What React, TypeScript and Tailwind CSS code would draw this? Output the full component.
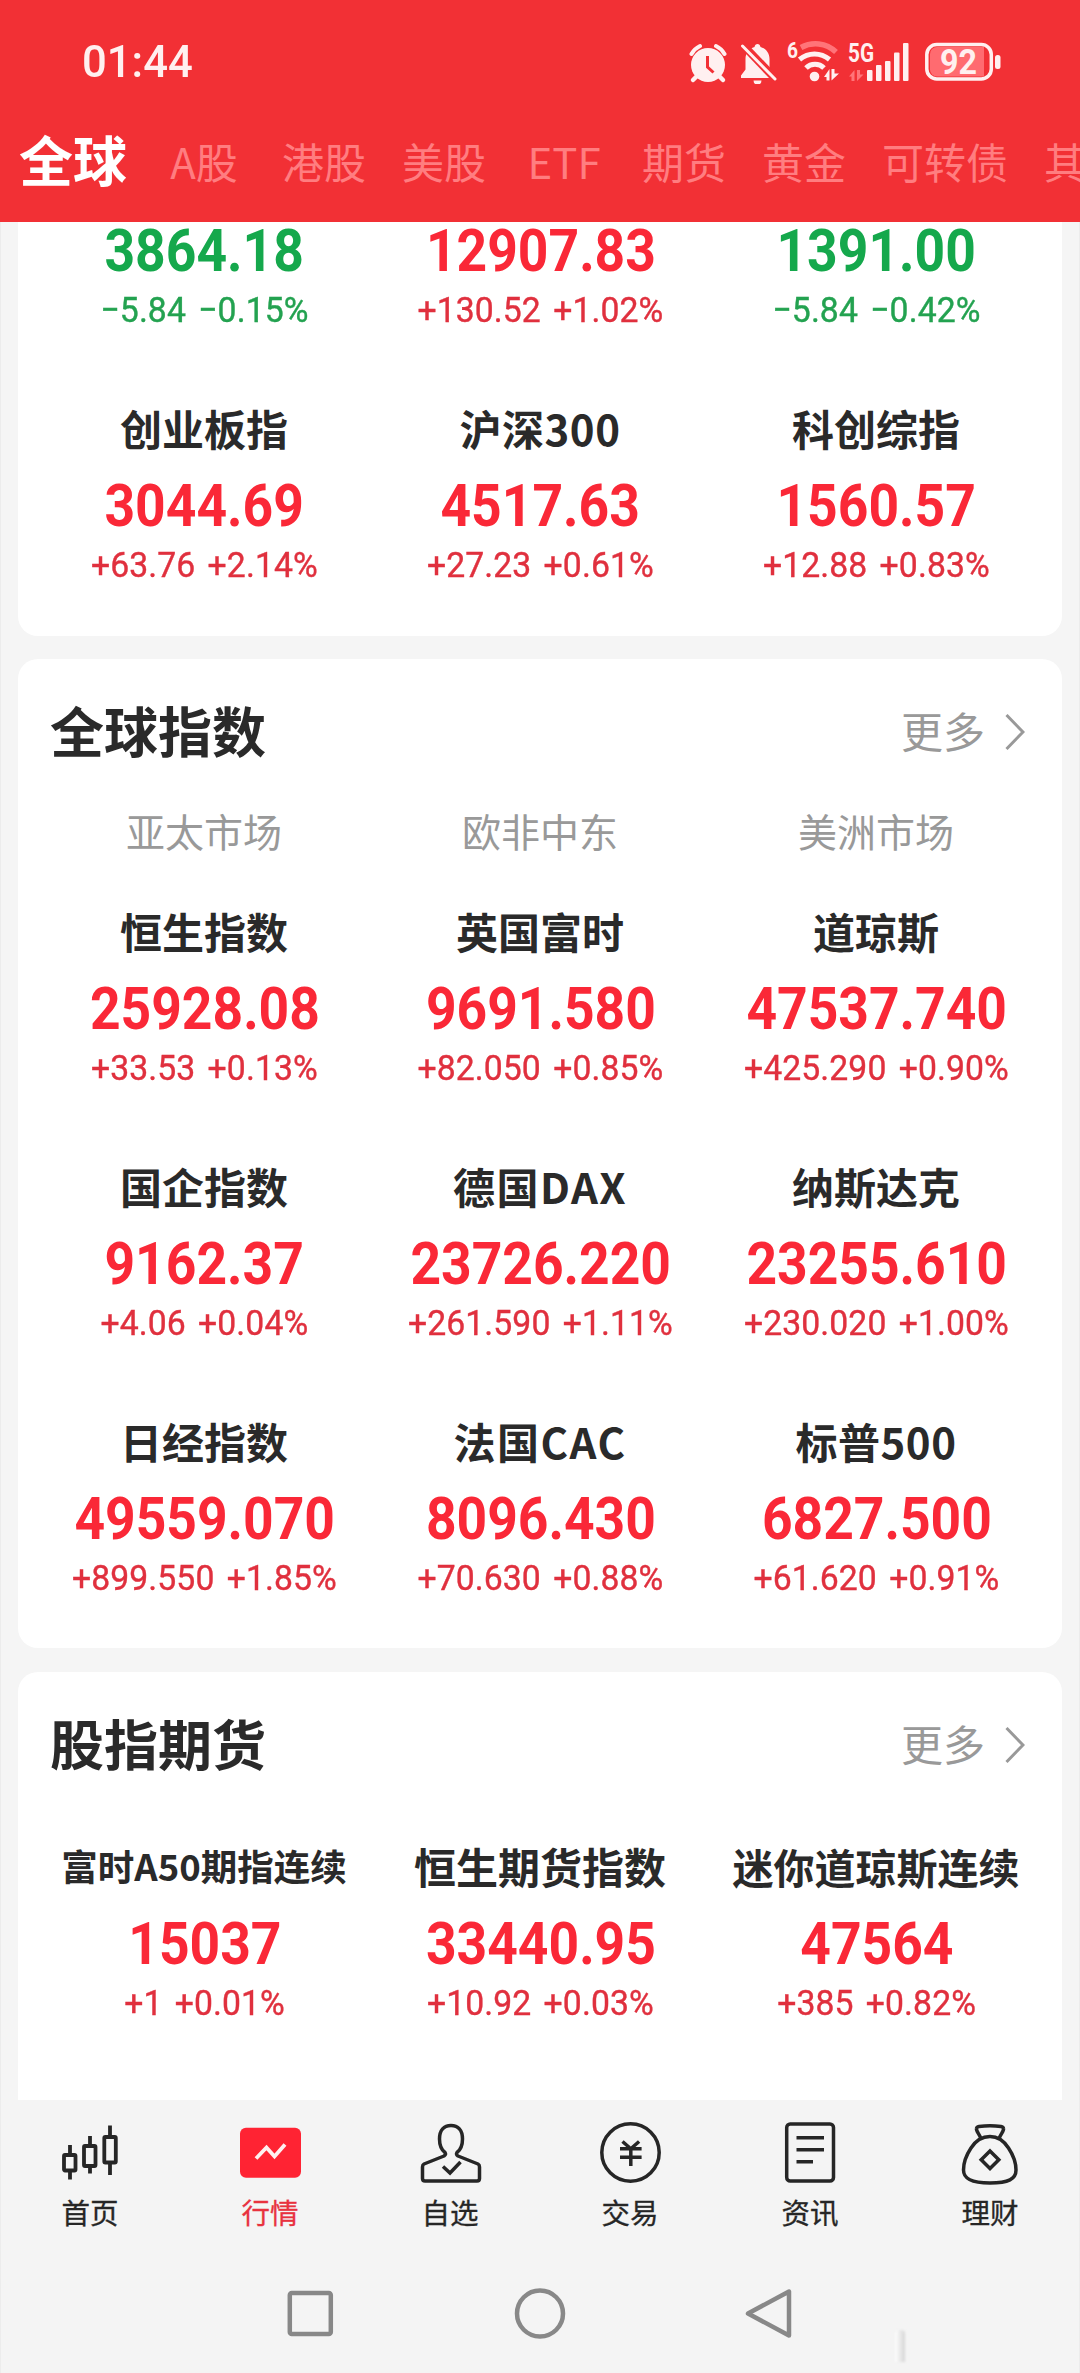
import React from "react";

type Quote = { name?: string; value: string; change: string; down?: boolean; size?: string };

// The first row is scrolled up under the header, so only its figures remain in view.
const mainland: Quote[] = [
  { value: "3864.18", change: "−5.84 −0.15%", down: true },
  { value: "12907.83", change: "+130.52 +1.02%" },
  { value: "1391.00", change: "−5.84 −0.42%", down: true },
  { name: "创业板指", value: "3044.69", change: "+63.76 +2.14%" },
  { name: "沪深300", value: "4517.63", change: "+27.23 +0.61%", size: "text-[42px] tracking-[0.5px]" },
  { name: "科创综指", value: "1560.57", change: "+12.88 +0.83%" },
];

const world: Quote[] = [
  { name: "恒生指数", value: "25928.08", change: "+33.53 +0.13%" },
  { name: "英国富时", value: "9691.580", change: "+82.050 +0.85%" },
  { name: "道琼斯", value: "47537.740", change: "+425.290 +0.90%" },
  { name: "国企指数", value: "9162.37", change: "+4.06 +0.04%" },
  { name: "德国DAX", value: "23726.220", change: "+261.590 +1.11%", size: "text-[42px] tracking-[1.5px]" },
  { name: "纳斯达克", value: "23255.610", change: "+230.020 +1.00%" },
  { name: "日经指数", value: "49559.070", change: "+899.550 +1.85%" },
  { name: "法国CAC", value: "8096.430", change: "+70.630 +0.88%", size: "text-[42px] tracking-[1.5px]" },
  { name: "标普500", value: "6827.500", change: "+61.620 +0.91%", size: "text-[42px] tracking-[0.5px]" },
];

const futures: Quote[] = [
  { name: "富时A50期指连续", value: "15037", change: "+1 +0.01%", size: "text-[36.5px]" },
  { name: "恒生期货指数", value: "33440.95", change: "+10.92 +0.03%" },
  { name: "迷你道琼斯连续", value: "47564", change: "+385 +0.82%", size: "text-[41px]" },
];

const tabs = ["A股", "港股", "美股", "ETF", "期货", "黄金", "可转债", "其他"];

function QuoteCell({ q }: { q: Quote }) {
  return (
    <div className="flex flex-col items-center whitespace-nowrap">
      <div className={`h-14 leading-[52px] font-bold text-[#2a2a2a] ${q.size ?? "text-[42px]"}`}>{q.name}</div>
      <div
        className={`mt-4 h-16 origin-center scale-x-[0.913] pl-px font-[Roboto] text-[58.5px] leading-[64px] font-bold ${
          q.down ? "text-[#15a84c]" : "text-[#fa2837]"
        }`}
      >
        {q.value}
      </div>
      <div
        className={`mt-[5px] h-11 origin-center scale-x-[0.95] pl-px font-[Roboto] text-[35.5px] leading-[44px] tracking-[0.1px] [word-spacing:4px] [-webkit-text-stroke:0.4px_currentColor] ${
          q.down ? "text-[#23a250]" : "text-[#e0303e]"
        }`}
      >
        {q.change}
      </div>
    </div>
  );
}

function QuoteGrid({ items }: { items: Quote[] }) {
  return (
    <div className="grid grid-cols-3 gap-y-[70px]">
      {items.map((q) => (
        <QuoteCell key={q.value} q={q} />
      ))}
    </div>
  );
}

function SectionHeader({ title }: { title: string }) {
  return (
    <div className="-mx-[18px] flex h-[145px] items-center pr-[37px] pl-[32px]">
      <h2 className="flex-1 pb-1 text-[54px] leading-[60px] font-bold text-[#2a2a2a]">{title}</h2>
      <span className="pb-1 text-[42px] leading-[60px] text-[#999]">更多</span>
      <svg className="ml-5 h-[38px] w-5" viewBox="0 0 20 38" fill="none" stroke="#999" strokeWidth="3">
        <path d="M1.500 2 18 19 1.500 36" />
      </svg>
    </div>
  );
}

function StatusIcons() {
  return (
    <div className="flex h-[44px] items-center text-[#fff0f0]">
      {/* alarm */}
      <svg className="h-11 w-[38px]" viewBox="0 0 38 44" fill="none">
        <circle cx="19" cy="25" r="17" fill="currentColor" />
        <path d="M2.500 14A19 19 0 0 1 11 6" stroke="currentColor" strokeWidth="4" strokeLinecap="round" />
        <path d="M27 6a19 19 0 0 1 8.500 8" stroke="currentColor" strokeWidth="4" strokeLinecap="round" />
        <path d="m8 36-4 4M30 36l4 4" stroke="currentColor" strokeWidth="4.500" strokeLinecap="round" />
        <path d="M18.500 16v11l6 5.500" stroke="#f23035" strokeWidth="3" />
      </svg>
      {/* muted bell */}
      <svg className="ml-[13px] h-11 w-[38px]" viewBox="0 0 38 44" fill="currentColor">
        <path d="M1 38v-2.500l4.500-6V19c0-6 3.500-10.500 9-12 .3-2 1.500-3 3-3s2.700 1 3 3c5.500 1.500 9 6 9 12v10.500L35 38z" />
        <path d="M13.500 40.500h8a4 4 0 0 1-8 0z" />
        <path d="M3 5 36 39.500" stroke="#f23035" strokeWidth="8" />
        <path d="M2.500 6 35 39" stroke="currentColor" strokeWidth="3" strokeLinecap="round" />
      </svg>
      {/* wifi */}
      <svg className="ml-[9px] h-11 w-[54px]" viewBox="0 0 54 44" fill="none">
        <text x="0" y="17.500" fontSize="22.500" fontWeight="700" fontFamily="Roboto, sans-serif" fill="currentColor" textLength="11" lengthAdjust="spacingAndGlyphs">6</text>
        <path d="M14 7.500C25 1.500 39 2.500 49 12" stroke="#ff7479" strokeWidth="5.500" />
        <path d="M12.500 19.500c9-7.500 21-7.500 30 0" stroke="currentColor" strokeWidth="5" />
        <path d="M19 28c5-5 13-5 18 0" stroke="currentColor" strokeWidth="5" />
        <circle cx="27.500" cy="36.500" r="4.800" fill="currentColor" />
        <path d="M37 37h2.500v3.500h3V29zM44.500 29v11.500l7.500-7h-4.500V29z" fill="currentColor" />
      </svg>
      {/* cellular signal */}
      <svg className="ml-[7px] h-11 w-[62px]" viewBox="0 0 62 44" fill="currentColor">
        <text x="0" y="21.500" fontSize="26" fontWeight="700" fontFamily="Roboto, sans-serif" textLength="26" lengthAdjust="spacingAndGlyphs">5G</text>
        <path d="M1 36.500h2.500V41h3V30zM9 30v11l6.500-6.500H12V30z" fill="#ff7479" />
        <rect x="19" y="30" width="5.500" height="11" rx="1" />
        <rect x="28" y="25" width="5.500" height="16" rx="1" />
        <rect x="37" y="21" width="5.500" height="20" rx="1" />
        <rect x="46" y="12.500" width="5.500" height="28.500" rx="1" />
        <rect x="55" y="3" width="5.500" height="38" rx="1" />
      </svg>
      {/* battery */}
      <svg className="ml-[15px] h-11 w-[78px]" viewBox="0 0 78 44" fill="none">
        <rect x="1.800" y="4.500" width="64.500" height="34.500" rx="10" stroke="currentColor" strokeWidth="3.500" />
        <path d="M12 7h47v29.500H12a7 7 0 0 1-7-7V14a7 7 0 0 1 7-7z" fill="#ff6b70" />
        <rect x="70" y="15" width="5.500" height="14" rx="2.500" fill="currentColor" />
        <text x="15" y="34" fontSize="35" fontWeight="700" fontFamily="Roboto, sans-serif" fill="currentColor" textLength="37" lengthAdjust="spacingAndGlyphs">92</text>
      </svg>
    </div>
  );
}

const navItems: { label: string; active?: boolean; icon: React.ReactNode }[] = [
  {
    label: "首页",
    icon: (
      <g strokeWidth="3.800">
        <rect x="7" y="35" width="11.500" height="15.500" rx="1" />
        <path d="M13 25v9M13 51v8.500" />
        <rect x="27" y="26" width="11.500" height="20" rx="1" />
        <path d="M33 16v9M33 47v6.500" />
        <rect x="47.300" y="17" width="11.500" height="25.500" rx="1" />
        <path d="M53 5.500v11M53 43v12" />
      </g>
    ),
  },
  {
    label: "行情",
    active: true,
    icon: (
      <g stroke="none">
        <rect x="3" y="7.700" width="61" height="50" rx="6" fill="#ff2333" />
        <path d="M19 38.500 29.500 27.500l8 9L48 24.500" stroke="#fff0f0" strokeWidth="3.800" />
      </g>
    ),
  },
  {
    label: "自选",
    icon: (
      <g strokeWidth="3.500" strokeLinejoin="round">
        <path d="M28 32.500C24 29.500 22.500 25 22.500 19 22.500 10 27 5.500 34 5.500S45.500 10 45.500 19c0 6-1.500 10.500-5.500 13.500-1 1.500-.5 2.500 1 3.500l20 8c1 .5 1.500 1.500 1.500 3v11.500c0 1.500-1 2.500-2.500 2.500H8c-1.500 0-2.500-1-2.500-2.500V47c0-1.500.5-2.500 1.500-3l20-8c1.500-1 2-2 1-3.500z" />
        <path d="m26 46.500 7 6.500 10.500-11" strokeLinejoin="miter" />
      </g>
    ),
  },
  {
    label: "交易",
    icon: (
      <g strokeWidth="3.500">
        <circle cx="33.500" cy="32.500" r="28.700" />
        <path d="M23 28.700h21.600M23 37.300h21.600M33.800 28v18M25.500 21.500l8.300 7.200 8.300-7.200" />
      </g>
    ),
  },
  {
    label: "资讯",
    icon: (
      <g strokeWidth="3.500">
        <rect x="9.700" y="4" width="46.800" height="57" rx="3.500" />
        <path d="M19.500 17.800H47M19.500 29.800H47M19.500 41.700H36" />
      </g>
    ),
  },
  {
    label: "理财",
    icon: (
      <g strokeWidth="3.500" strokeLinejoin="round">
        <path d="M24 18.500c-2-5-5-7.500-4.500-10 .2-1.300 1-1.700 2.500-2 7-1 15-1 22 0 1.500.3 2.300.7 2.500 2 .5 2.500-2.500 5-4.500 10" />
        <path d="M33 16.500c8 0 14 4.500 18.500 11.500 4 6 7.500 15 7.500 22 0 9-7.500 13-26 13S6.500 59 6.500 50c0-7 3.500-16 7.500-22 4.500-7 11-11.500 19-11.500z" />
        <path d="m33 31 8.800 8.700L33 48.500l-8.800-8.800z" strokeLinejoin="miter" />
      </g>
    ),
  },
];

export default function App() {
  return (
    <div className="flex h-[2373px] w-[1080px] flex-col overflow-hidden bg-[#f5f5f5] font-['Noto_Sans_CJK_SC',sans-serif]">
      <header className="h-[222px] shrink-0 overflow-hidden bg-[#f23035]">
        <div className="flex h-[123px] items-center justify-between pr-[77px] pl-[82px]">
          <span className="origin-left scale-x-[0.97] font-[Roboto] text-[45px] leading-[48px] font-medium text-[#fff0f0]">01:44</span>
          <StatusIcons />
        </div>
        <nav className="flex h-[72px] items-center gap-9 pl-[19px] whitespace-nowrap">
          <span className="w-[107px] shrink-0 text-[54px] leading-[72px] font-bold text-white">全球</span>
          {tabs.map((t) => (
            <span key={t} className="min-w-[84px] shrink-0 pt-1 text-center text-[42px] leading-[68px] text-[#ff7d80]">
              {t}
            </span>
          ))}
        </nav>
      </header>

      <main className="h-[1878px] shrink-0 overflow-hidden border-x border-[#ececec] px-[17px]">
        <section className="-mt-[75px] rounded-[20px] bg-white px-[18px] pb-[49px]">
          <QuoteGrid items={mainland} />
        </section>
        <section className="mt-[23px] rounded-[20px] bg-white px-[18px] pb-12">
          <SectionHeader title="全球指数" />
          <div className="mb-[45px] grid h-14 grid-cols-3 text-center text-[39px] leading-[52px] text-[#999]">
            <span>亚太市场</span>
            <span>欧非中东</span>
            <span>美洲市场</span>
          </div>
          <QuoteGrid items={world} />
        </section>
        <section className="mt-6 h-[480px] rounded-t-[20px] bg-white px-[18px]">
          <SectionHeader title="股指期货" />
          <div className="pt-[23px]">
            <QuoteGrid items={futures} />
          </div>
        </section>
      </main>

      <footer className="h-[273px] shrink-0 border-x border-[#ececec] bg-[#f4f4f4]">
        <nav className="-mx-px grid h-[154px] grid-cols-6 pt-5">
          {navItems.map((n) => (
            <div key={n.label} className="flex flex-col items-center">
              <svg className="h-[66px] w-[66px]" viewBox="0 0 66 66" fill="none" stroke="#262626">
                {n.icon}
              </svg>
              <span className={`mt-[6px] text-[28.5px] leading-10 [-webkit-text-stroke:0.3px_currentColor] ${n.active ? "text-[#e8323f]" : "text-[#262626]"}`}>{n.label}</span>
            </div>
          ))}
        </nav>
        <div className="relative flex h-[119px] justify-center gap-[176px] pt-[33px]">
          <svg className="h-[54px] w-[54px]" viewBox="0 0 54 54" fill="none" stroke="#888" strokeWidth="4.500">
            <rect x="6.800" y="6" width="41" height="41" rx="2" />
          </svg>
          <svg className="h-[54px] w-[54px]" viewBox="0 0 54 54" fill="none" stroke="#888" strokeWidth="4.500">
            <circle cx="27" cy="26.500" r="23" />
          </svg>
          <svg className="h-[54px] w-[54px]" viewBox="0 0 54 54" fill="none" stroke="#888" strokeWidth="4.500" strokeLinejoin="round">
            <path d="M46 4.500v44L5 26.500z" />
          </svg>
          <span className="absolute top-[76px] left-[894px] h-8 w-2.5 rounded-t bg-gradient-to-r from-white to-[#d6d6d6] blur-[1px]" />
        </div>
      </footer>
    </div>
  );
}
